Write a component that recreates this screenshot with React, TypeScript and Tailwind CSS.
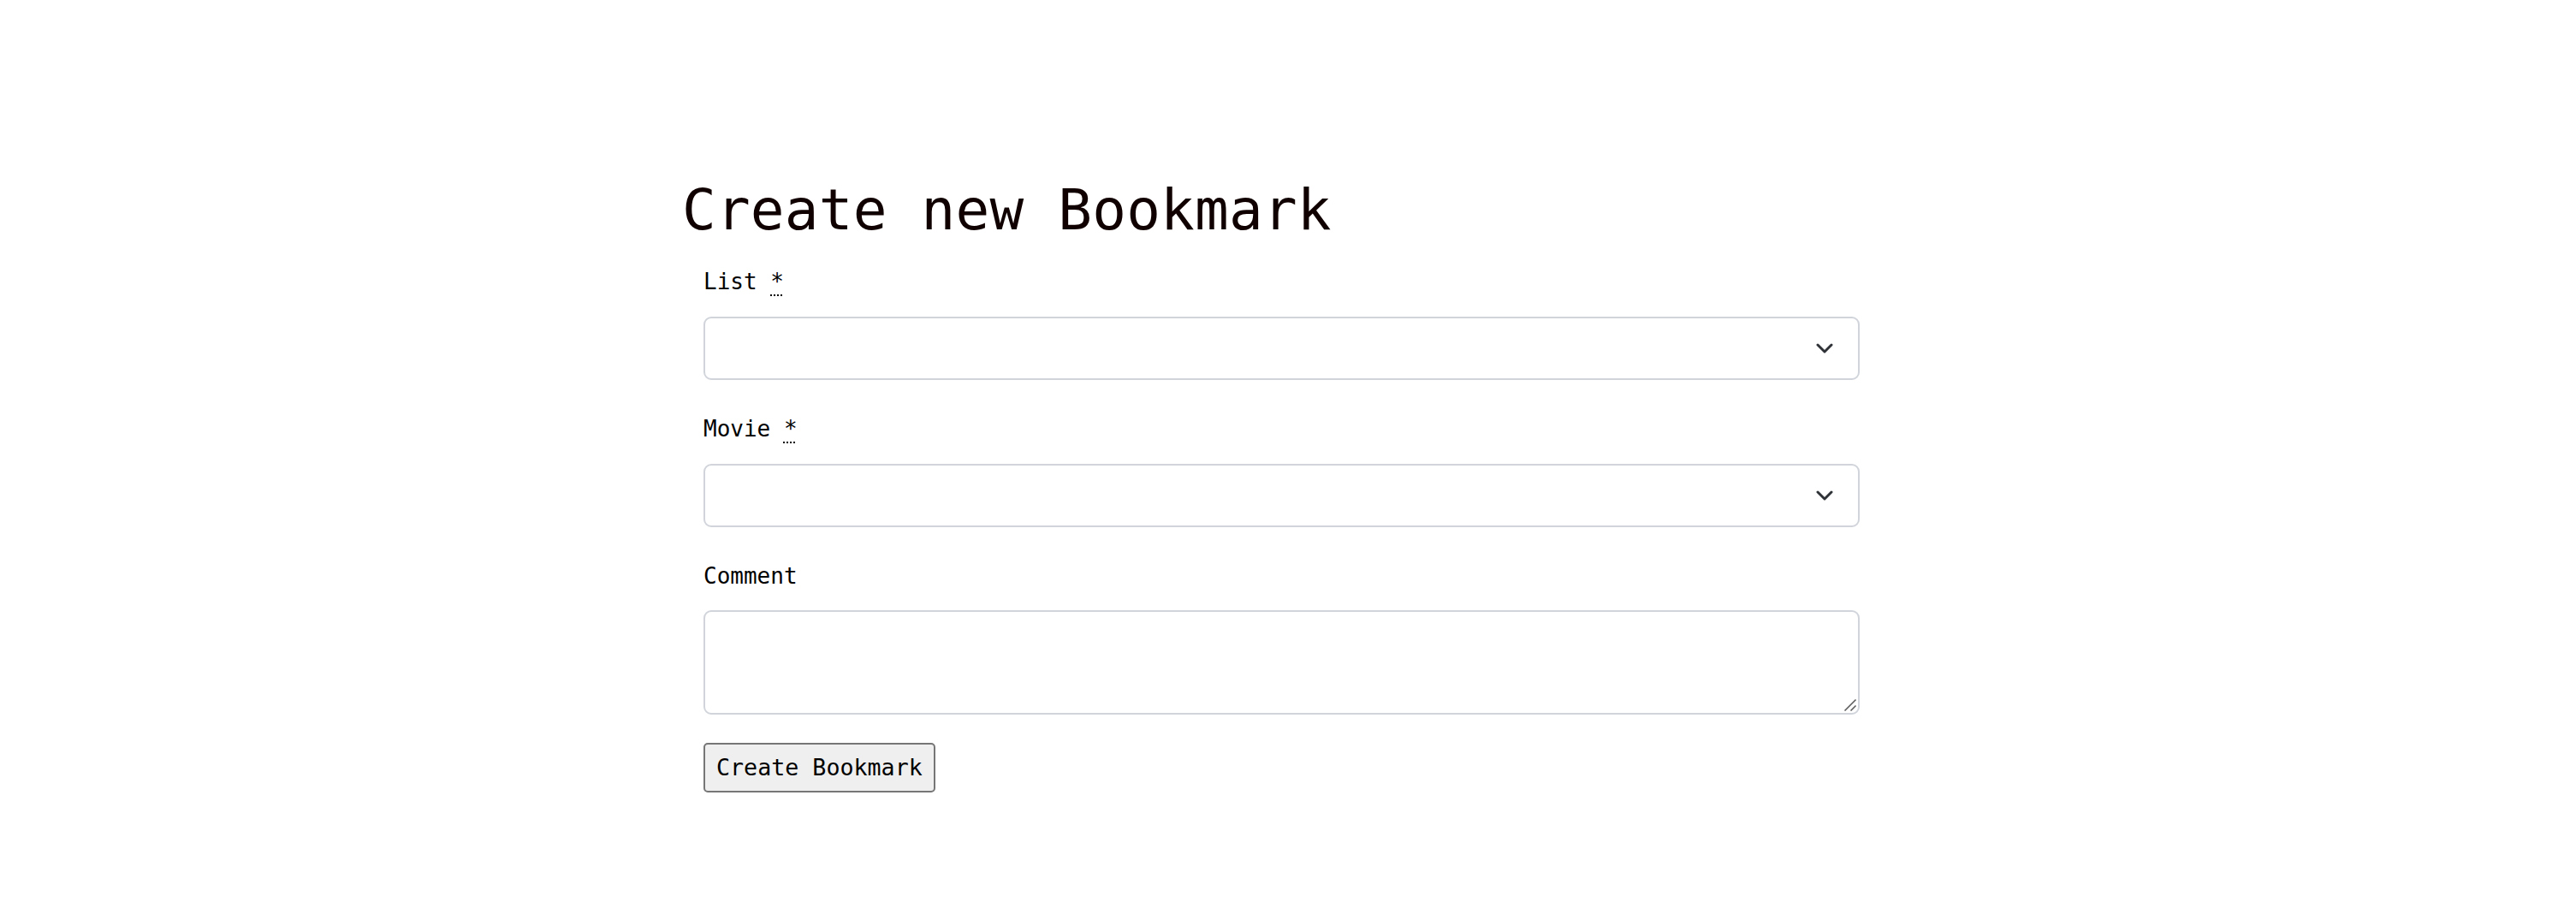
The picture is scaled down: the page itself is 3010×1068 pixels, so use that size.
import React from "react";

function Chevron() {
  return (
    <svg
      className="pointer-events-none absolute right-[31px] top-1/2 -translate-y-1/2"
      width="20"
      height="12"
      viewBox="0 0 20 12"
      fill="none"
    >
      <path d="M2 2 L10 10 L18 2" stroke="#2f3237" strokeWidth="3" strokeLinecap="round" strokeLinejoin="round" />
    </svg>
  );
}

function Label({ text, required }: { text: string; required?: boolean }) {
  return (
    <label className="block text-[26px] leading-[30px] text-black">
      {text}
      {required && (
        <>
          {" "}
          <abbr title="required" className="no-underline">
            <span className="underline decoration-dotted decoration-[2px] underline-offset-[6px]">*</span>
          </abbr>
        </>
      )}
    </label>
  );
}

function SelectField() {
  return (
    <div className="relative mt-[26px]">
      <select className="block h-[74px] w-full appearance-none rounded-[9px] border-2 border-[#d1d5db] bg-white px-4 outline-none">
        <option value=""></option>
      </select>
      <Chevron />
    </div>
  );
}

export default function App() {
  return (
    <main className="min-h-screen bg-white pl-[797px] pt-[213px] font-['DejaVu_Sans_Mono',monospace] text-black">
      <h1 className="text-[66px] font-normal leading-[66px] tracking-[0.2px] text-[#100000]">Create new Bookmark</h1>
      <form className="ml-[25px] mt-[35px] w-[1351px]" onSubmit={(e) => e.preventDefault()}>
        <div>
          <Label text="List" required />
          <SelectField />
        </div>
        <div className="mt-[42px]">
          <Label text="Movie" required />
          <SelectField />
        </div>
        <div className="mt-[42px]">
          <Label text="Comment" />
          <div className="relative mt-[25px]">
            <textarea className="block h-[122px] w-full resize-none rounded-[9px] border-2 border-[#d1d5db] bg-white p-3 outline-none" />
            <svg
              className="pointer-events-none absolute bottom-[3px] right-[3px]"
              width="16"
              height="16"
              viewBox="0 0 16 16"
              fill="none"
            >
              <path d="M1.5 14.5 L14.5 1.5" stroke="#5b5b5b" strokeWidth="1.6" />
              <path d="M8.5 14.5 L14.5 8.5" stroke="#5b5b5b" strokeWidth="1.6" />
            </svg>
          </div>
        </div>
        <button
          type="submit"
          className="mt-[33px] flex h-[58px] items-center rounded-[5px] border-2 border-[#767676] bg-[#efefef] px-[13px] font-['DejaVu_Sans_Mono',monospace] text-[26.67px] leading-none text-black"
        >
          Create Bookmark
        </button>
      </form>
    </main>
  );
}
